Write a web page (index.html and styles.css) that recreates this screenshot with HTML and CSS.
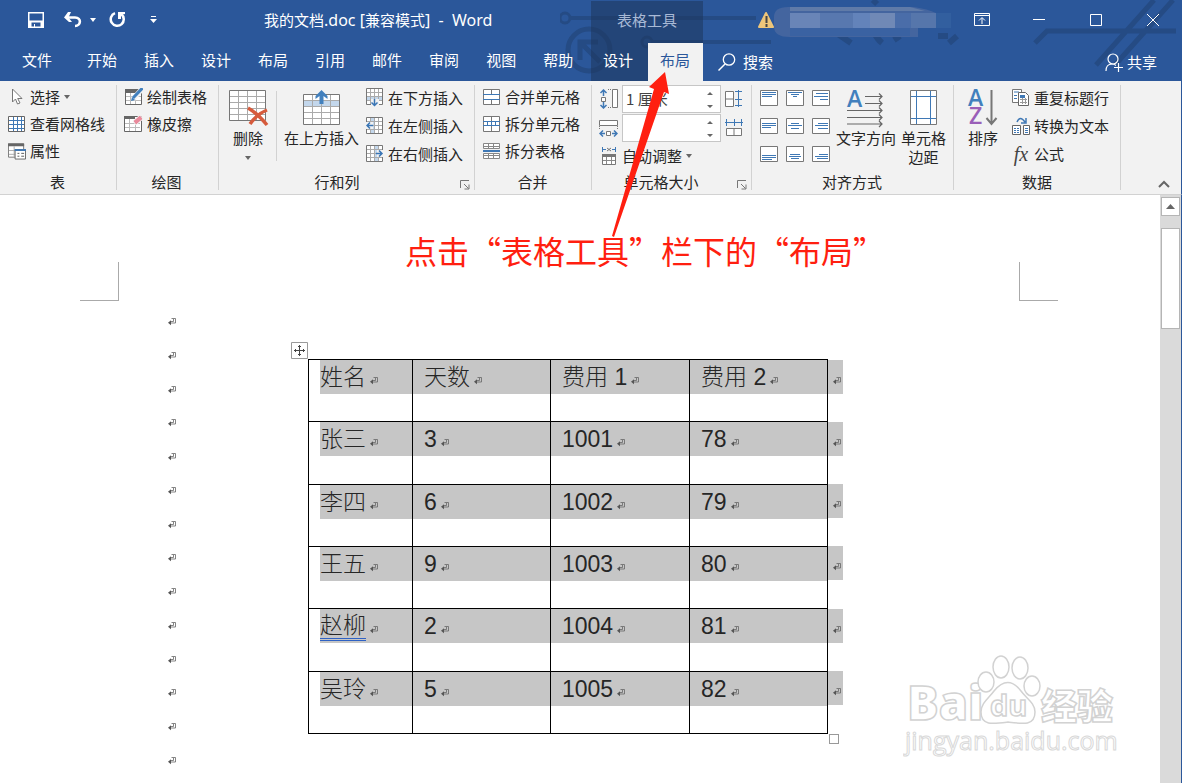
FILE: index.html
```html
<!DOCTYPE html>
<html lang="zh-CN">
<head>
    <meta charset="UTF-8">
    <meta name="viewport" content="width=device-width, initial-scale=1.0">
    <title>我的文档.doc [兼容模式] - Word</title>
    <link rel="stylesheet" href="styles.css">
</head>
<body>
    <svg class="defs" width="0" height="0" aria-hidden="true">
        <symbol id="mark" viewBox="0 0 8 8"><path d="M3.500 .5h4v4.500H3M5.500 1v2.500H2.500" fill="none" stroke="#666" stroke-width=".8"/><path d="M0 4.800l3-2.500v5z" fill="#555"/></symbol>
        <symbol id="down" viewBox="0 0 6 4"><path d="M0 0h6L3 4z"/></symbol>
        <symbol id="launcher" viewBox="0 0 10 10"><path d="M.5 8V.5H9M4 4l4.500 4.500M9 4.500V9H4.500" fill="none" stroke="#777"/></symbol>
    </svg>

    <header class="header">
        <svg class="circuit" width="622" height="81" viewBox="0 0 622 81" aria-hidden="true">
            <g fill="none" stroke="#254b84" stroke-width="4">
                <circle cx="5" cy="18" r="5" stroke-width="3"/><path d="M11 18h185M93 42h118"/>
                <circle cx="29" cy="50" r="21" stroke-width="5"/><path d="M20 60V42h18M22 44l18 18" stroke-width="5"/>
                <circle cx="87" cy="42" r="5" stroke-width="3"/>
                <path d="M275 32l16 11M314 32q3 7 8 11M340 36l-6 4M378 36h10M397 36l-8 7M313 4l4-4" stroke-width="6"/>
                <path d="M475 43l12-12h129M536 65l58-65M555 65l58-65" stroke-width="5"/>
            </g>
        </svg>
        <div class="title-left">
            <div class="quick-access">
                <button aria-label="保存"><svg width="16" height="16" viewBox="0 0 16 16"><path d="M0 0h16v16H0zM1.500 1.500v7h13v-7zM3.500 10.500v4h2.500v-2.500h1v2.500h5.500v-4z" fill="#fff" fill-rule="evenodd"/></svg></button>
                <button aria-label="撤消"><svg width="19" height="16" viewBox="0 0 19 16"><path d="M3 5.500h8c7 0 6 8.500 0 8.500" fill="none" stroke="#fff" stroke-width="2.600"/><path d="M7 0H4L0 5.500 5 10h3L4.500 5.500z" fill="#fff"/></svg></button>
                <button class="undo-more" aria-label="撤消选项"><svg width="6" height="4" fill="#fff"><use href="#down"/></svg></button>
                <button aria-label="重复"><svg width="17" height="17" viewBox="0 0 17 17"><path d="M6 2.200A6.500 6.500 0 1 0 12 3" fill="none" stroke="#fff" stroke-width="2.500"/><path d="M9 1h7v2l-4 1v4H9z" fill="#fff"/></svg></button>
                <button class="customize" aria-label="自定义快速访问工具栏"><svg width="7" height="8" viewBox="0 0 7 8"><path d="M1 .5h5" stroke="#fff"/><path d="M0 3h7L3.500 7z" fill="#fff"/></svg></button>
            </div>
            <div class="doc-title">我的文档<span class="latin">.doc [</span>兼容模式<span class="latin">]&nbsp; -&nbsp; Word</span></div>
        </div>
        <div class="context-title">表格工具</div>
        <div class="title-right">
            <svg class="account" width="196" height="34" viewBox="0 0 196 34" aria-hidden="true">
                <path d="M9 10l7 14H2z" fill="#edc57a" stroke="#edc57a" stroke-width="2" stroke-linejoin="round"/>
                <path d="M9.500 13v7M9.500 21v3" stroke="#444" stroke-width="2"/>
                <path d="M17 14q0-10 14-10h126q14 2 22 6v15h-18v9H33q-16 0-16-10z" fill="#44659f"/>
                <path d="M33 10h30v15H33z" fill="#6985b7"/><path d="M63 10h33v15H63z" fill="#5878af"/>
                <path d="M96 10h17v15H96z" fill="#6383ba"/><path d="M113 10h25v15h-25z" fill="#7089b6"/>
                <path d="M138 10h16v15h-16z" fill="#4a6da9"/><path d="M154 10h25v15h-25z" fill="#5676ab"/>
                <path d="M179 10h15v15h-15z" fill="#325f9f"/>
                <path d="M33 25h120v8H33z" fill="#3a62a2"/><path d="M33 4h120l15 4H33z" fill="#607ba8"/>
            </svg>
            <div class="window-buttons">
                <button aria-label="功能区显示选项"><svg width="16" height="13" viewBox="0 0 16 13"><path d="M.5.5h15v12H.5zM1 2.500h14M8 11V5M5 7.500l3-3 3 3" fill="none" stroke="#fff"/></svg></button>
                <button aria-label="最小化"><svg width="12" height="12"><path d="M0 5.500h12" stroke="#fff"/></svg></button>
                <button aria-label="最大化"><svg width="12" height="12"><path d="M.5.5h11v11H.5z" fill="none" stroke="#fff"/></svg></button>
                <button aria-label="关闭"><svg width="12" height="12"><path d="M0 0l12 12M12 0L0 12" stroke="#fff"/></svg></button>
            </div>
        </div>
        <nav class="tabs">
            <button class="tab file">文件</button>
            <button class="tab">开始</button>
            <button class="tab">插入</button>
            <button class="tab">设计</button>
            <button class="tab">布局</button>
            <button class="tab">引用</button>
            <button class="tab">邮件</button>
            <button class="tab">审阅</button>
            <button class="tab">视图</button>
            <button class="tab">帮助</button>
        </nav>
        <nav class="context-tabs">
            <button class="tab">设计</button>
            <button class="tab active">布局</button>
        </nav>
        <div class="tab-tools">
            <button class="search"><svg width="18" height="18" viewBox="0 0 18 18"><path d="M7 11L.5 17.500" stroke="#fff" stroke-width="1.500"/><circle cx="11" cy="6.500" r="5.700" fill="none" stroke="#fff" stroke-width="1.300"/></svg>搜索</button>
            <button class="share"><svg width="18" height="19" viewBox="0 0 18 19"><g fill="none" stroke="#fff" stroke-width="1.200"><circle cx="8" cy="6" r="5"/><path d="M1 18c0-5 3-7 6-7 2 0 3 .5 4 1.500M9 14.500h9M13.500 10v9"/></g></svg>共享</button>
        </div>
    </header>

    <section class="ribbon">
        <div class="group g-table">
            <div class="group-body">
                <div class="stack">
                    <button class="cmd"><svg width="18" height="18" viewBox="0 0 18 18"><path d="M4.500 1v13l3-3 2 5 2.500-1-2.300-4.500H14z" fill="#fff" stroke="#777"/></svg>选择<svg class="arrow" width="6" height="4"><use href="#down"/></svg></button>
                    <button class="cmd"><svg width="18" height="18" viewBox="0 0 18 18"><path d="M.5 1.500h16v15H.5z" fill="#fff" stroke="#666"/><path d="M5.500 2v14M9.500 2v14M13.500 2v14M1 5.500h15M1 9.500h15M1 13.500h15" stroke="#3f78b5"/></svg>查看网格线</button>
                    <button class="cmd"><svg width="19" height="18" viewBox="0 0 19 18"><path d="M.5 1.500h16v14H.5z" fill="#fff" stroke="#777"/><path d="M0 1h17v3H0z" fill="#666"/><path d="M1 8.500h15M1 12.500h15M6.500 4v11" stroke="#aaa"/><path d="M7.500 7.500h11v10h-11z" fill="#fff" stroke="#666"/><path d="M7 7h12v2H7z" fill="#3f78b5"/><path d="M10 11.500h2M10 14.500h2M14 11.500h3M14 14.500h3" stroke="#555"/></svg>属性</button>
                </div>
            </div>
            <div class="group-name">表</div>
        </div>

        <div class="group g-draw">
            <div class="group-body">
                <div class="stack">
                    <button class="cmd"><svg width="19" height="18" viewBox="0 0 19 18"><path d="M1.500 1.500h16v15h-16z" fill="#fff" stroke="#666"/><path d="M1 1h17v4H1z" fill="#666"/><path d="M2 8.500h15M2 12.500h15M6.500 5v11M11.500 5v11" stroke="#bbb"/><path d="M18 1L9 11" stroke="#f2f2f2" stroke-width="5"/><path d="M18.500 0L9 10" stroke="#4280bd" stroke-width="3"/><path d="M7 13l1-4 3 3z" fill="#4280bd"/></svg>绘制表格</button>
                    <button class="cmd"><svg width="19" height="18" viewBox="0 0 19 18"><path d="M.5 1.500h17v15H.5z" fill="#fff" stroke="#666"/><path d="M0 1h11v3H0z" fill="#666"/><path d="M1 8.500h15M1 12.500h15M5.500 4v12M11.500 4v12" stroke="#bbb"/><path d="M9 6l7-6 3 4-7 6z" fill="#e98a9c" stroke="#f2f2f2"/></svg>橡皮擦</button>
                </div>
            </div>
            <div class="group-name">绘图</div>
        </div>

        <div class="group g-rows">
            <div class="group-body">
                <button class="big delete"><svg width="40" height="36" viewBox="0 0 40 36"><path d="M1.500.5h36v30h-36z" fill="#fff" stroke="#777"/><path d="M2 6.500h35M2 12.500h35M2 18.500h35M2 24.500h35M10.500 1v29M19.500 1v29M28.500 1v29" stroke="#aaa"/><path d="M20 18q9 5 19 17M39 20q-10 4-17 14" fill="none" stroke="#d65b3c" stroke-width="3.500"/></svg>删除<svg class="arrow" width="6" height="4"><use href="#down"/></svg></button>
                <span class="divider"></span>
                <button class="big above"><svg width="38" height="36" viewBox="0 0 38 36"><path d="M.5 4.500h36v30H.5z" fill="#fff" stroke="#777"/><path d="M1 11h35v6H1z" fill="#c3d7ec"/><path d="M1 10.500h35M1 16.500h35M1 22.500h35M1 28.500h35M9.500 5v29M18.500 5v29M27.500 5v29" stroke="#aaa"/><path d="M18.500 0l6 6v3l-4-3v8h-4V6l-4 3V6z" fill="#4280bd"/></svg>在上方插入</button>
                <div class="stack">
                    <button class="cmd"><svg width="18" height="19" viewBox="0 0 18 19"><path d="M.5.500h16v16H.5z" fill="#fff" stroke="#777"/><path d="M1 9h15v4H1z" fill="#c3d7ec"/><path d="M1 4.500h15M1 8.500h15M1 12.500h15M4.500 1v15M8.500 1v15M12.500 1v15" stroke="#aaa"/><path d="M5 11h8v8H5z" fill="#f2f2f2"/><path d="M8.500 11v7M5.500 14.500l3 3 3-3" fill="none" stroke="#3975b5" stroke-width="1.500"/></svg>在下方插入</button>
                    <button class="cmd"><svg width="18" height="18" viewBox="0 0 18 18"><path d="M.5.500h16v16H.5z" fill="#fff" stroke="#777"/><path d="M5 1h4v15H5z" fill="#c3d7ec"/><path d="M1 4.500h15M1 8.500h15M1 12.500h15M4.500 1v15M8.500 1v15M12.500 1v15" stroke="#aaa"/><path d="M0 5h7v7H0z" fill="#f2f2f2"/><path d="M7 8.500H1M4 5.500l-3 3 3 3" fill="none" stroke="#3975b5" stroke-width="1.500"/></svg>在左侧插入</button>
                    <button class="cmd"><svg width="18" height="18" viewBox="0 0 18 18"><path d="M.5.500h16v16H.5z" fill="#fff" stroke="#777"/><path d="M9 1h4v15H9z" fill="#c3d7ec"/><path d="M1 4.500h15M1 8.500h15M1 12.500h15M4.500 1v15M8.500 1v15M12.500 1v15" stroke="#aaa"/><path d="M11 5h7v7h-7z" fill="#f2f2f2"/><path d="M10 8.500h6M13 5.500l3 3-3 3" fill="none" stroke="#3975b5" stroke-width="1.500"/></svg>在右侧插入</button>
                </div>
            </div>
            <div class="group-name">行和列</div>
            <button class="launch" aria-label="表格属性"><svg width="10" height="10"><use href="#launcher"/></svg></button>
        </div>

        <div class="group g-merge">
            <div class="group-body">
                <div class="stack">
                    <button class="cmd"><svg width="18" height="17" viewBox="0 0 18 17"><path d="M.5.500h16v15H.5zM8.500 1v4M8.500 11v4" fill="#fff" stroke="#777"/><path d="M0 5.500h17M0 10.500h17" stroke="#3f78b5"/></svg>合并单元格</button>
                    <button class="cmd"><svg width="18" height="17" viewBox="0 0 18 17"><path d="M.5.500h16v15H.5zM8.500 1v14" fill="#fff" stroke="#777"/><path d="M1 6h15v3H1z" fill="#fff"/><path d="M0 5.500h17M0 9.500h17M4.500 6v3M8.500 6v3M12.500 6v3" stroke="#3f78b5"/></svg>拆分单元格</button>
                    <button class="cmd"><svg width="18" height="17" viewBox="0 0 18 17"><path d="M.5.500h16v5H.5zM.5 10.500h16v5H.5zM5.500 0v6M10.500 0v6M5.500 10v6M10.500 10v6M0 3.500h17M0 12.500h17" fill="#fff" stroke="#888"/><path d="M0 8h17" stroke="#3f78b5" stroke-width="2"/></svg>拆分表格</button>
                </div>
            </div>
            <div class="group-name">合并</div>
        </div>

        <div class="group g-size">
            <div class="group-body">
                <div class="stack">
                    <div class="size-row">
                        <label for="rowHeight" title="高度"><svg width="19" height="20" viewBox="0 0 19 20"><path d="M4.500 1v6M1.500 4l3-3 3 3M4.500 13v6M1.500 16l3 3 3-3" fill="none" stroke="#3f78b5" stroke-width="1.500"/><path d="M2.500 8.500h4v4h-4zM13.500.500h5v18h-5z" fill="#fff" stroke="#777"/><path d="M9 .5h4M9 18.500h4" stroke="#777" stroke-dasharray="1 1"/></svg></label>
                        <div class="spin"><input type="text" id="rowHeight" value="1 厘米"><svg width="6" height="16"><path d="M0 4h6L3 1zM0 14h6l-3 3z"/></svg></div>
                        <button aria-label="分布行"><svg width="18" height="18" viewBox="0 0 18 18"><path d="M.5 1.500h8v15h-8zM0 9h9" fill="#fff" stroke="#777"/><path d="M13.500 0v17M10 1.500h7M10 9.500h7M10 15.500h7" stroke="#3f78b5"/></svg></button>
                    </div>
                    <div class="size-row">
                        <label for="colWidth" title="宽度"><svg width="19" height="20" viewBox="0 0 19 20"><path d="M.5 2.500h18v5H.5zM7.500 13.500h4v4h-4z" fill="#fff" stroke="#777"/><path d="M.5 8v4M18.500 8v4" stroke="#777" stroke-dasharray="1 1"/><path d="M6 15.500H1M4 12.500l-3 3 3 3M13 15.500h5M15 12.500l3 3-3 3" fill="none" stroke="#3f78b5" stroke-width="1.500"/></svg></label>
                        <div class="spin"><input type="text" id="colWidth"><svg width="6" height="16"><path d="M0 4h6L3 1zM0 14h6l-3 3z"/></svg></div>
                        <button aria-label="分布列"><svg width="18" height="18" viewBox="0 0 18 18"><path d="M1.500 9.500h15v7h-15zM9 9v8" fill="#fff" stroke="#777"/><path d="M0 3.500h18M1.500 0v7M9.500 0v7M16.500 0v7" stroke="#3f78b5"/></svg></button>
                    </div>
                    <button class="cmd"><svg width="19" height="18" viewBox="0 0 19 18"><path d="M3.500 7.500h13v10h-13z" fill="#fff" stroke="#777"/><path d="M3 7h14v3H3z" fill="#777"/><path d="M4 13.500h12M7.500 10v7M12.500 10v7" stroke="#888"/><path d="M3.500 0v5M16.500 0v5M4 2.500h3M13 2.500h3" stroke="#3f78b5"/><path d="M8 1l4 3M12 1L8 4" stroke="#777"/></svg>自动调整<svg class="arrow" width="6" height="4"><use href="#down"/></svg></button>
                </div>
            </div>
            <div class="group-name">单元格大小</div>
            <button class="launch" aria-label="单元格大小选项"><svg width="10" height="10"><use href="#launcher"/></svg></button>
        </div>

        <div class="group g-align">
            <div class="group-body">
                <div class="align-grid">
                    <button aria-label="靠上两端对齐"><svg width="18" height="16"><path class="box" d="M.5.500h17v15H.5z"/><path class="ln" d="M2 2.500h14M2 4.500h14M2 6.500h10"/></svg></button>
                    <button aria-label="靠上居中对齐"><svg width="18" height="16"><path class="box" d="M.5.500h17v15H.5z"/><path class="ln" d="M2 2.500h14M5 4.500h8M7 6.500h4"/></svg></button>
                    <button aria-label="靠上右对齐"><svg width="18" height="16"><path class="box" d="M.5.500h17v15H.5z"/><path class="ln" d="M4 3.500h12M2 6.500h14M8 9.500h8"/></svg></button>
                    <button aria-label="中部两端对齐"><svg width="18" height="16"><path class="box" d="M.5.500h17v15H.5z"/><path class="ln" d="M2 5.500h14M2 7.500h14M2 9.500h9"/></svg></button>
                    <button aria-label="水平居中"><svg width="18" height="16"><path class="box" d="M.5.500h17v15H.5z"/><path class="ln" d="M5 5.500h8M2 7.500h14M5 10.500h8"/></svg></button>
                    <button aria-label="中部右对齐"><svg width="18" height="16"><path class="box" d="M.5.500h17v15H.5z"/><path class="ln" d="M6 5.500h10M3 7.500h13M6 10.500h10"/></svg></button>
                    <button aria-label="靠下两端对齐"><svg width="18" height="16"><path class="box" d="M.5.500h17v15H.5z"/><path class="ln" d="M2 9.500h14M2 11.500h14M2 13.500h10"/></svg></button>
                    <button aria-label="靠下居中对齐"><svg width="18" height="16"><path class="box" d="M.5.500h17v15H.5z"/><path class="ln" d="M4 8.500h10M3 10.500h12M5 12.500h8"/></svg></button>
                    <button aria-label="靠下右对齐"><svg width="18" height="16"><path class="box" d="M.5.500h17v15H.5z"/><path class="ln" d="M7 8.500h9M3 10.500h13M5 12.500h11"/></svg></button>
                </div>
                <button class="big direction"><svg width="38" height="36" viewBox="0 0 38 36"><text class="letter" x="0" y="17" fill="#4280bd">A</text><path d="M18 6.500h17M18 13.500h17M0 20.500h35M0 27.500h35M0 34h35M32 3.500l3 3-3 3M32 10.500l3 3-3 3M32 17.500l3 3-3 3M32 24.500l3 3-3 3M32 31l3 3-3 3" fill="none" stroke="#666" stroke-width="1.200"/></svg>文字方向</button>
                <button class="big margins"><svg width="28" height="36" viewBox="0 0 28 36"><path d="M.5.500h26v34H.5z" fill="#fff" stroke="#777"/><path d="M6.500 1v33M20.500 1v33M1 6.500h25M1 28.500h25" stroke="#3f78b5"/></svg>单元格<br>边距</button>
            </div>
            <div class="group-name">对齐方式</div>
        </div>

        <div class="group g-data">
            <div class="group-body">
                <button class="big sort"><svg width="30" height="36" viewBox="0 0 30 36"><text class="letter" x="0" y="16" fill="#4280bd">A</text><text class="letter" x="1" y="34" fill="#9a5fb8">Z</text><path d="M23.500 0v33M18.500 28l5 6 5-6" fill="none" stroke="#777" stroke-width="2"/></svg>排序</button>
                <div class="stack">
                    <button class="cmd"><svg width="18" height="18" viewBox="0 0 18 18"><path d="M.5.500h9v13h-9z" fill="#fff" stroke="#777"/><path d="M2 3h5M2 6.500h3M2 9.500h3" stroke="#3f78b5"/><path d="M6.500 3.500h7l3 3v10h-10z" fill="#fff" stroke="#666"/><path d="M8 6h5v3H8z" fill="#3f78b5"/><path d="M8 10.500h7M8 13.500h7M10.500 9v6M13.500 9v6" stroke="#999"/></svg>重复标题行</button>
                    <button class="cmd"><svg width="18" height="18" viewBox="0 0 18 18"><path d="M.5 8.500h8v9h-8zM11.500 8.500h6v9h-6z" fill="#fff" stroke="#666"/><path d="M2 11.500h2M5 11.500h2M2 13.500h2M5 13.500h2M2 15.500h2M5 15.500h2M13 11.500h3M13 13.500h3M13 15.500h3" stroke="#3f78b5"/><path d="M5 5q3-7 8 0M14 1v5H9" fill="none" stroke="#3f78b5" stroke-width="1.500"/></svg>转换为文本</button>
                    <button class="cmd"><span class="fx" aria-hidden="true">fx</span>公式</button>
                </div>
            </div>
            <div class="group-name">数据</div>
        </div>
        <button class="collapse" aria-label="折叠功能区"><svg width="12" height="8"><path d="M1 7l5-5 5 5" fill="none" stroke="#666" stroke-width="2"/></svg></button>
    </section>

    <main class="workspace">
        <div class="page">
            <span class="crop left"></span>
            <span class="crop right"></span>
            <div class="marks">
                <svg><use href="#mark"/></svg>
                <svg><use href="#mark"/></svg>
                <svg><use href="#mark"/></svg>
                <svg><use href="#mark"/></svg>
                <svg><use href="#mark"/></svg>
                <svg><use href="#mark"/></svg>
                <svg><use href="#mark"/></svg>
                <svg><use href="#mark"/></svg>
                <svg><use href="#mark"/></svg>
                <svg><use href="#mark"/></svg>
                <svg><use href="#mark"/></svg>
                <svg><use href="#mark"/></svg>
                <svg><use href="#mark"/></svg>
                <svg><use href="#mark"/></svg>
            </div>
            <div class="table-wrap">
                <svg class="move-handle" width="17" height="17" viewBox="0 0 17 17"><path d="M.5.500h16v16H.5z" fill="#fff" stroke="#999"/><path d="M8.500 3v11M3 8.500h11M7 4.500h3M7 12.500h3M4.500 7v3M12.500 7v3" stroke="#444"/></svg>
                <table class="doc-table">
                    <colgroup><col class="c-name"><col class="c-num"><col class="c-num wide"><col class="c-num"><col class="c-end"></colgroup>
                    <tr>
                        <th><div>姓名<svg><use href="#mark"/></svg></div></th>
                        <th><div>天数<svg><use href="#mark"/></svg></div></th>
                        <th><div>费用 1<svg><use href="#mark"/></svg></div></th>
                        <th><div>费用 2<svg><use href="#mark"/></svg></div></th>
                        <td class="end"><div><svg><use href="#mark"/></svg></div></td>
                    </tr>
                    <tr>
                        <td><div>张三<svg><use href="#mark"/></svg></div></td>
                        <td><div>3<svg><use href="#mark"/></svg></div></td>
                        <td><div>1001<svg><use href="#mark"/></svg></div></td>
                        <td><div>78<svg><use href="#mark"/></svg></div></td>
                        <td class="end"><div><svg><use href="#mark"/></svg></div></td>
                    </tr>
                    <tr>
                        <td><div>李四<svg><use href="#mark"/></svg></div></td>
                        <td><div>6<svg><use href="#mark"/></svg></div></td>
                        <td><div>1002<svg><use href="#mark"/></svg></div></td>
                        <td><div>79<svg><use href="#mark"/></svg></div></td>
                        <td class="end"><div><svg><use href="#mark"/></svg></div></td>
                    </tr>
                    <tr>
                        <td><div>王五<svg><use href="#mark"/></svg></div></td>
                        <td><div>9<svg><use href="#mark"/></svg></div></td>
                        <td><div>1003<svg><use href="#mark"/></svg></div></td>
                        <td><div>80<svg><use href="#mark"/></svg></div></td>
                        <td class="end"><div><svg><use href="#mark"/></svg></div></td>
                    </tr>
                    <tr>
                        <td><div><span class="spell">赵柳</span><svg><use href="#mark"/></svg></div></td>
                        <td><div>2<svg><use href="#mark"/></svg></div></td>
                        <td><div>1004<svg><use href="#mark"/></svg></div></td>
                        <td><div>81<svg><use href="#mark"/></svg></div></td>
                        <td class="end"><div><svg><use href="#mark"/></svg></div></td>
                    </tr>
                    <tr>
                        <td><div>吴玲<svg><use href="#mark"/></svg></div></td>
                        <td><div>5<svg><use href="#mark"/></svg></div></td>
                        <td><div>1005<svg><use href="#mark"/></svg></div></td>
                        <td><div>82<svg><use href="#mark"/></svg></div></td>
                        <td class="end"><div><svg><use href="#mark"/></svg></div></td>
                    </tr>
                </table>
                <span class="resize-handle"></span>
            </div>
            <svg class="watermark" width="220" height="110" viewBox="0 0 220 110">
                <g fill="#fff" stroke="#d2d2d2" stroke-width="1.500">
                    <text class="wm-brand" x="4" y="70">Bai</text>
                    <ellipse cx="83" cy="32" rx="8" ry="10"/>
                    <ellipse cx="98" cy="17" rx="8" ry="11"/>
                    <ellipse cx="117" cy="18" rx="8" ry="11"/>
                    <ellipse cx="129" cy="36" rx="8" ry="10"/>
                    <path d="M91 41q14-17 27 0c5 7 14 12 14 21 0 14-12 12-27 10-15 2-27 4-27-10 0-9 8-14 13-21z"/>
                    <text class="wm-du" x="87" y="66">du</text>
                    <text class="wm-cn" x="138" y="70">经验</text>
                </g>
                <text class="wm-url" x="2" y="100">jingyan.baidu.com</text>
            </svg>
        </div>
        <div class="scrollbar" aria-hidden="true">
            <div class="scroll-up"><svg width="9" height="5"><path d="M0 5h9L4.500 0z" fill="#666"/></svg></div>
            <div class="thumb"></div>
        </div>
    </main>

    <p class="note">点击“表格工具”栏下的“布局”</p>
    <svg class="note-arrow" width="68" height="170" viewBox="0 0 68 170" aria-hidden="true"><path d="M61 0l4 22-5-2L10 165l-2-1L50 17l-5-2z" fill="#ff1f10"/></svg>
</body>
</html>
```
FILE: styles.css
```css
* {
    box-sizing: border-box;
}
body {
    margin: 0;
    height: 100vh;
    display: flex;
    flex-direction: column;
    overflow: hidden;
    position: relative;
    background: #fff;
    color: #262626;
    font-family: "Noto Sans CJK SC", "Noto Sans", sans-serif;
    font-size: 15px;
    line-height: 20px;
}
button {
    padding: 0;
    border: none;
    background: none;
    color: inherit;
    font: inherit;
    white-space: nowrap;
}
svg {
    display: block;
    flex: none;
}
.defs {
    position: absolute;
}

/* title bar and tabs */
.header {
    position: relative;
    display: grid;
    grid-template-columns: 591px 112px minmax(0, 1fr);
    grid-template-rows: 43px 38px;
    background: #2b579a;
    color: #fff;
}
.circuit {
    position: absolute;
    top: 0;
    right: 0;
}
.title-left,
.title-right,
.quick-access,
.window-buttons,
.tabs,
.context-tabs,
.tab-tools {
    display: flex;
    align-items: center;
    position: relative;
}
.title-left,
.title-right {
    padding-bottom: 4px;
}
.quick-access {
    flex: 0 0 264px;
    padding-left: 28px;
}
.quick-access button:nth-child(2) {
    margin-left: 20px;
}
.quick-access .undo-more {
    margin: 0 13px 0 7px;
}
.quick-access .customize {
    margin-left: 24px;
}
.doc-title {
    font-family: "Noto Sans", "Noto Sans CJK SC", sans-serif;
    white-space: nowrap;
}
.latin {
    font-size: 16px;
}
.context-title,
.context-tabs {
    background: rgba(30, 54, 92, 0.55);
    position: relative;
}
.context-title {
    display: flex;
    align-items: center;
    justify-content: center;
    padding-bottom: 5px;
    margin-top: 1px;
    color: #a9bad6;
}
.title-right {
    justify-content: space-between;
    padding-left: 54px;
}
.window-buttons {
    margin-right: 1px;
}
.window-buttons button {
    width: 57px;
    height: 38px;
    display: flex;
    align-items: center;
    justify-content: center;
}
.tabs {
    gap: 1px;
}
.tab {
    height: 38px;
    padding: 0 13px 4px;
}
.tab.file {
    padding: 0 21px 4px 22px;
}
.context-tabs .tab {
    padding-left: 12px;
}
.context-tabs .active {
    background: #f2f2f2;
    color: #2b579a;
    margin-left: 2px;
}
.tab-tools {
    justify-content: space-between;
    padding: 0 25px 0 15px;
}
.search,
.share {
    display: flex;
    align-items: center;
    gap: 7px;
}
.share {
    gap: 4px;
}

/* ribbon */
.ribbon {
    display: flex;
    position: relative;
    height: 114px;
    padding: 4px 0;
    background: #f2f2f2;
    border-bottom: 1px solid #d2d2d2;
    border-right: 1px solid #2b579a;
}
.group {
    position: relative;
    display: flex;
    flex-direction: column;
    flex: none;
    justify-content: space-between;
    border-right: 1px solid #d2d2d2;
}
.g-table { width: 117px; padding-left: 8px; }
.g-draw { width: 102px; padding-left: 7px; }
.g-rows { width: 256px; padding-left: 9px; }
.g-merge { width: 117px; padding-left: 8px; }
.g-size { width: 160px; padding-left: 7px; }
.g-align { width: 202px; padding-left: 8px; }
.g-data { width: 167px; padding-left: 14px; }
.group-body {
    display: flex;
}
.group-name {
    text-align: center;
    height: 16px;
    line-height: 16px;
    padding-right: 9px;
}
.g-rows .group-name {
    padding-right: 28px;
}
.g-size .group-name {
    padding-right: 28px;
}
.g-data .group-name {
    padding-right: 14px;
}
.stack {
    display: flex;
    flex-direction: column;
}
.cmd {
    display: flex;
    align-items: center;
    gap: 4px;
    height: 28px;
    padding-bottom: 3px;
}
.g-table .cmd,
.g-draw .cmd,
.g-merge .cmd {
    height: 27px;
}
.g-table .cmd > svg:first-child,
.g-merge .cmd > svg:first-child,
.g-rows .cmd > svg:first-child,
.g-data .cmd > svg:first-child {
    width: 18px;
}
.arrow {
    fill: #666;
}
.big {
    display: flex;
    flex-direction: column;
    align-items: center;
    padding-top: 5px;
    line-height: 19px;
}
.big > svg:first-child {
    margin-bottom: 2px;
    overflow: visible;
}
.big .arrow {
    margin-top: 9px;
}
.divider {
    width: 1px;
    height: 70px;
    margin: 6px 7px 0 8px;
    background: #d2d2d2;
}
.above {
    margin-right: 7px;
}
.launch {
    position: absolute;
    right: 4px;
    bottom: 0;
}
.size-row {
    display: flex;
    align-items: center;
    gap: 4px;
    height: 29px;
    padding-bottom: 2px;
}
.spin {
    display: flex;
    align-items: center;
    width: 99px;
    height: 28px;
    padding-right: 7px;
    background: #fff;
    border: 1px solid #c6c6c6;
    fill: #666;
}
.spin input {
    flex: 1;
    min-width: 0;
    padding: 0 0 0 3px;
    border: none;
    background: none;
    color: #444;
    font: inherit;
    outline: none;
}
.spin svg {
    overflow: visible;
}
.align-grid {
    display: grid;
    grid-template-columns: repeat(3, 18px);
    grid-auto-rows: 16px;
    gap: 12px 8px;
    padding-top: 5px;
}
.box {
    fill: #fff;
    stroke: #777;
}
.ln {
    stroke: #3f78b5;
}
.letter {
    font-family: "Open Sans", sans-serif;
    font-size: 23px;
    font-weight: 600;
}
.direction {
    margin: 0 5px 0 6px;
}
.sort {
    margin-right: 14px;
}
.fx {
    width: 18px;
    font-family: "Liberation Serif", serif;
    font-style: italic;
    font-size: 20px;
    color: #444;
}
.collapse {
    position: absolute;
    right: 11px;
    bottom: 6px;
}

/* document */
.workspace {
    flex: 1;
    display: flex;
    min-height: 0;
    border-right: 1px solid #2b579a;
}
.page {
    flex: 1;
    position: relative;
    display: flex;
    padding-left: 168px;
}
.crop {
    position: absolute;
    top: 67px;
    width: 39px;
    height: 39px;
    border-bottom: 1px solid #aaa;
}
.crop.left {
    left: 80px;
    border-right: 1px solid #aaa;
}
.crop.right {
    right: 103px;
    border-left: 1px solid #aaa;
}
.marks {
    display: flex;
    flex-direction: column;
    justify-content: space-between;
    padding: 123px 0 18px;
}
.marks svg,
.doc-table svg {
    width: 8px;
    height: 8px;
}
.table-wrap {
    position: relative;
    align-self: flex-start;
    margin: 164px 0 0 132px;
}
.doc-table {
    width: 534px;
    height: 375px;
    table-layout: fixed;
    border-collapse: collapse;
    font-family: "Liberation Sans", "Noto Sans CJK SC", sans-serif;
    font-size: 23px;
    line-height: 34px;
}
.c-name { width: 104px; }
.c-num { width: 138px; }
.c-num.wide { width: 139px; }
.c-end { width: 15px; }
.doc-table td,
.doc-table th {
    padding: 0;
    border: 1px solid #000;
    vertical-align: top;
    text-align: left;
    font-weight: 300;
}
.doc-table div {
    display: flex;
    align-items: center;
    gap: 4px;
    height: 34px;
    padding-left: 11px;
    background: #c6c6c6;
    white-space: nowrap;
}
.doc-table svg {
    margin-top: 8px;
}
.doc-table tr > :first-child div {
    margin-left: 11px;
    padding-left: 0;
}
.doc-table .end {
    border-width: 0 0 0 1px;
}
.doc-table .end div {
    padding-left: 5px;
}
.spell {
    line-height: 26px;
    border-bottom: 3px double #2f62c4;
}
.move-handle {
    position: absolute;
    left: -17px;
    top: -17px;
}
.resize-handle {
    position: absolute;
    right: 4px;
    bottom: -10px;
    width: 10px;
    height: 10px;
    background: #fff;
    border: 1px solid #999;
}
.scrollbar {
    width: 21px;
    padding: 2px 1px 0 1px;
    background: #dadada;
}
.scroll-up {
    display: flex;
    align-items: center;
    justify-content: center;
    height: 19px;
    background: #fff;
    border: 1px solid #b5b5b5;
}
.thumb {
    height: 101px;
    margin-top: 12px;
    background: #fff;
    border: 1px solid #b5b5b5;
}
.crop.right {
    right: 102px;
}
.watermark {
    position: absolute;
    right: 37px;
    bottom: 23px;
}
.wm-brand {
    font: 800 47px "Open Sans", sans-serif;
}
.wm-du {
    font: 700 29px "Open Sans", sans-serif;
}
.wm-cn {
    font: 900 36px "Noto Sans CJK SC", sans-serif;
}
.wm-url {
    font: 400 25px "Open Sans", sans-serif;
    fill: #fff;
    stroke: #d8d8d8;
    stroke-width: 1px;
}

/* callout over the window */
.note {
    position: absolute;
    left: 405px;
    top: 228px;
    margin: 0;
    color: #ff1f10;
    font-size: 32px;
    line-height: 44px;
    white-space: nowrap;
}
.note-arrow {
    position: absolute;
    left: 604px;
    top: 72px;
}
```
